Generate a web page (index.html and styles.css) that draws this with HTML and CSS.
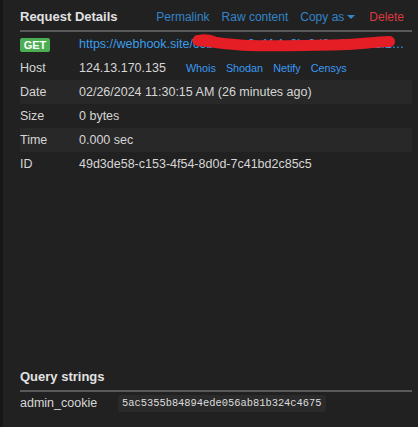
FILE: index.html
```html
<!DOCTYPE html>
<html>
<head>
<meta charset="utf-8">
<link rel="stylesheet" href="styles.css">
</head>
<body>
<div class="strip"></div>
<main class="main">
  <div class="section-head">
    <h2 class="title">Request Details</h2>
    <nav class="actions">
      <a class="act">Permalink</a>
      <a class="act">Raw content</a>
      <a class="act">Copy as<span class="caret"></span></a>
      <a class="act del">Delete</a>
    </nav>
  </div>
  <div class="rows">
    <div class="row url-row">
      <div class="lbl"><span class="badge">GET</span></div>
      <div class="val url">https://webhook.site/c6b71f4c-2e1f-4a8b-9d2c-3d0b82f1e7a9d4c1</div>
      <svg class="scribble" width="210" height="24" viewBox="0 0 210 24"><path d="M8,7.5 C 25,9 40,12 60,12.5 S 150,12.5 172,10.5 S 195,8.5 199.5,8.5" fill="none" stroke="#e51e25" stroke-width="11" stroke-linecap="round"/><path d="M9,6 C 14,4.5 20,5 26,8" fill="none" stroke="#e51e25" stroke-width="8" stroke-linecap="round"/></svg>
    </div>
    <div class="row">
      <div class="lbl">Host</div>
      <div class="val">124.13.170.135<span class="tools"><a class="tool">Whois</a><a class="tool">Shodan</a><a class="tool">Netify</a><a class="tool">Censys</a></span></div>
    </div>
    <div class="row alt">
      <div class="lbl">Date</div>
      <div class="val">02/26/2024 11:30:15 AM (26 minutes ago)</div>
    </div>
    <div class="row">
      <div class="lbl">Size</div>
      <div class="val">0 bytes</div>
    </div>
    <div class="row alt">
      <div class="lbl">Time</div>
      <div class="val">0.000 sec</div>
    </div>
    <div class="row">
      <div class="lbl">ID</div>
      <div class="val">49d3de58-c153-4f54-8d0d-7c41bd2c85c5</div>
    </div>
  </div>
  <section class="query">
    <div class="section-head">
      <h2 class="title">Query strings</h2>
    </div>
    <div class="qrow">
      <div class="qlbl">admin_cookie</div>
      <div class="qval"><code class="chip">5ac5355b84894ede056ab81b324c4675</code></div>
    </div>
  </section>
</main>
</body>
</html>
```

FILE: styles.css
```css
html, body {
  margin: 0;
  height: 100%;
}
body {
  display: flex;
  background: #212121;
  color: #d6d6d6;
  font-family: "Liberation Sans", Arial, sans-serif;
  font-size: 12.5px;
  overflow: hidden;
}
.strip {
  width: 3px;
  flex: none;
  background: #171717;
}
.main {
  flex: 1;
  padding: 0 6px 0 17px;
  min-width: 0;
}
.section-head {
  display: flex;
  align-items: baseline;
  padding: 9px 0 6px;
  border-bottom: 2px solid #5a5a5a;
  height: 15px;
}
.title {
  margin: 0;
  font-size: 13px;
  line-height: 15px;
  font-weight: bold;
  color: #e2e2e2;
}
.actions {
  margin-left: auto;
  display: flex;
  align-items: baseline;
  gap: 12px;
  padding-right: 8px;
}
.act {
  font-size: 12px;
  line-height: 15px;
  color: #3384c8;
}
.act.del {
  color: #dc3a3f;
  margin-left: 2px;
}
.caret {
  display: inline-block;
  width: 0;
  height: 0;
  margin-left: 3px;
  vertical-align: 2px;
  border-left: 4px solid transparent;
  border-right: 4px solid transparent;
  border-top: 4px solid #3384c8;
}
.row {
  display: flex;
  height: 24px;
  line-height: 24px;
  position: relative;
}
.row.alt {
  background: #282828;
}
.lbl {
  width: 59px;
  flex: none;
}
.val {
  flex: 1;
  min-width: 0;
  white-space: nowrap;
}
.url {
  color: #3c9dea;
  overflow: hidden;
  text-overflow: ellipsis;
  padding-right: 6px;
}
.badge {
  display: inline-block;
  width: 30px;
  height: 14px;
  line-height: 14px;
  margin-top: 6px;
  vertical-align: top;
  text-align: center;
  background: #4cae52;
  color: #fff;
  font-size: 11px;
  font-weight: bold;
  border-radius: 2px;
}
.scribble {
  position: absolute;
  left: 170px;
  top: 1px;
}
.tools {
  margin-left: 20px;
}
.tool {
  font-size: 10.8px;
  color: #3a99f2;
  margin-right: 10px;
}
.query {
  margin-top: 184px;
}
.qrow {
  display: flex;
  height: 22px;
  line-height: 22px;
  align-items: center;
}
.qlbl {
  width: 98px;
  flex: none;
}
.chip {
  display: inline-block;
  height: 17px;
  line-height: 17px;
  padding: 0 4px;
  background: #2a2a2a;
  border-radius: 3px;
  font-family: "Liberation Mono", monospace;
  font-size: 10.4px;
  color: #dcdcdc;
  vertical-align: middle;
}
```
